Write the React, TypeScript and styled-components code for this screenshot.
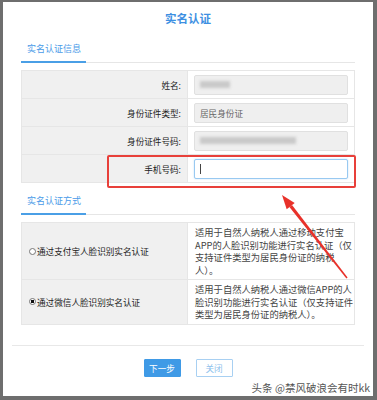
import React, { FC } from 'react'
import styled, { createGlobalStyle } from 'styled-components'

const Global = createGlobalStyle`
  html, body {
    margin: 0;
    padding: 0;
    background: #6e6e6e;
    font-family: "Noto Sans CJK SC", "Noto Sans", sans-serif;
  }
  * { box-sizing: border-box; }
`

type TInfoRow = { label: string, value?: string, blur?: number, active?: boolean }

const infoRows: TInfoRow[] = [
  { label: '姓名:', blur: 30 },
  { label: '身份证件类型:', value: '居民身份证' },
  { label: '身份证件号码:', blur: 96 },
  { label: '手机号码:', active: true },
]

type TMethod = { label: string, checked: boolean, lines: string[] }

const methods: TMethod[] = [
  {
    label: '通过支付宝人脸识别实名认证',
    checked: false,
    lines: ['适用于自然人纳税人通过移动支付宝', 'APP的人脸识别功能进行实名认证（仅', '支持证件类型为居民身份证的纳税', '人）。'],
  },
  {
    label: '通过微信人脸识别实名认证',
    checked: true,
    lines: ['适用于自然人纳税人通过微信APP的人', '脸识别功能进行实名认证（仅支持证件', '类型为居民身份证的纳税人）。'],
  },
]

const InfoTable: FC = () => (
  <S.Table>
    {infoRows.map((r) => (
      <S.Row key={r.label} $h={28}>
        <S.LabelCell>{r.label}</S.LabelCell>
        <S.ValueCell>
          <S.Input $active={r.active}>
            {r.value && <span>{r.value}</span>}
            {r.blur && <S.Blur style={{ width: r.blur }} />}
            {r.active && <S.Caret />}
          </S.Input>
        </S.ValueCell>
      </S.Row>
    ))}
  </S.Table>
)

const MethodTable: FC = () => (
  <S.Table>
    {methods.map((m) => (
      <S.Row key={m.label}>
        <S.RadioCell>
          <S.Radio $checked={m.checked} />
          {m.label}
        </S.RadioCell>
        <S.DescCell>
          {m.lines.map((l) => <div key={l}>{l}</div>)}
        </S.DescCell>
      </S.Row>
    ))}
  </S.Table>
)

const Arrow: FC = () => (
  <S.ArrowSvg width="377" height="400" viewBox="0 0 377 400">
    <polygon points="282,195 294.7,203 286.7,209.2" fill="#e8312a" />
    <polygon points="292,205.1 347.6,277.5 346.4,278.5 289.4,207.1" fill="#e8312a" />
  </S.ArrowSvg>
)

export default function App() {
  return (
    <S.Page>
      <Global />
      <S.Modal>
        <S.Title>实名认证</S.Title>
        <S.Body>
          <S.TabBar><S.Tab>实名认证信息</S.Tab></S.TabBar>
          <InfoTable />
          <S.TabBar $gap={4}><S.Tab>实名认证方式</S.Tab></S.TabBar>
          <MethodTable />
        </S.Body>
        <S.Footer>
          <S.Button $primary>下一步</S.Button>
          <S.Button>关闭</S.Button>
        </S.Footer>
        <S.Watermark>头条 @禁风破浪会有时kk</S.Watermark>
      </S.Modal>
      <S.Highlight />
      <Arrow />
    </S.Page>
  )
}

const S = {
  Page: styled.div`
    position: relative;
    width: 377px;
    height: 400px;
    padding: 2px 4px 4px 3px;
    overflow: hidden;
  `,
  Modal: styled.div`
    position: relative;
    height: 100%;
    background: #fff;
    display: flex;
    flex-direction: column;
  `,
    Title: styled.div`
      height: 33px;
      line-height: 33px;
      text-align: center;
      font-size: 11.5px;
      font-weight: bold;
      color: #3d8fe2;
    `,
    Body: styled.div`
      padding: 0 18px;
    `,
      TabBar: styled.div<{ $gap?: number }>`
        display: flex;
        margin-top: ${(p) => p.$gap || 0}px;
        margin-bottom: 7px;
        border-bottom: 1px solid #e6e6e6;
      `,
        Tab: styled.div`
          width: 65px;
          height: 28px;
          line-height: 28px;
          padding-left: 6px;
          margin-bottom: -1px;
          font-size: 9px;
          color: #4a9be8;
          border-bottom: 2px solid #4a9fe6;
        `,
      Table: styled.div`
        border: 1px solid #e6e6e6;
        border-bottom: none;
      `,
        Row: styled.div<{ $h?: number }>`
          display: grid;
          grid-template-columns: 166px 1fr;
          ${(p) => (p.$h ? `height: ${p.$h}px;` : '')}
          border-bottom: 1px solid #e6e6e6;
        `,
          LabelCell: styled.div`
            background: #f0f0f0;
            border-right: 1px solid #e6e6e6;
            display: flex;
            align-items: center;
            justify-content: flex-end;
            padding-right: 6px;
            font-size: 8.6px;
            color: #222;
          `,
          ValueCell: styled.div`
            display: flex;
            align-items: center;
            padding: 0 6px 0 6px;
          `,
            Input: styled.div<{ $active?: boolean }>`
              width: 100%;
              height: 20px;
              display: flex;
              align-items: center;
              padding-left: 5px;
              border-radius: 2px;
              font-size: 8.6px;
              color: #666;
              background: ${(p) => (p.$active ? '#fff' : '#efefef')};
              border: 1px solid ${(p) => (p.$active ? '#98c9f1' : '#e0e0e0')};
              ${(p) => (p.$active ? 'box-shadow: 0 0 2px rgba(80,160,230,0.35);' : '')}
            `,
              Blur: styled.span`
                display: block;
                height: 7px;
                background: #c9c9c9;
                filter: blur(1.5px);
              `,
              Caret: styled.span`
                display: block;
                width: 1px;
                height: 10px;
                background: #444;
              `,
          RadioCell: styled.div`
            background: #f0f0f0;
            border-right: 1px solid #e6e6e6;
            display: flex;
            align-items: center;
            padding-left: 7px;
            font-size: 8.6px;
            color: #222;
          `,
            Radio: styled.span<{ $checked: boolean }>`
              width: 7px;
              height: 7px;
              border-radius: 50%;
              border: 1px solid #777;
              background: ${(p) => (p.$checked ? 'radial-gradient(circle, #111 0 45%, #fff 55%)' : '#fff')};
              margin-right: 1px;
            `,
          DescCell: styled.div`
            padding: 3px 4px 3px 7px;
            font-size: 9.3px;
            line-height: 12.5px;
            color: #444;
            white-space: nowrap;
          `,
    Footer: styled.div`
      margin: 20px 9px 0 9px;
      border-top: 1px solid #e8e8e8;
      padding-top: 13px;
      display: flex;
      justify-content: center;
      gap: 15px;
    `,
      Button: styled.div<{ $primary?: boolean }>`
        width: 37px;
        height: 18px;
        line-height: 16px;
        text-align: center;
        font-size: 8.6px;
        border-radius: 1px;
        color: ${(p) => (p.$primary ? '#fff' : '#8cc0ec')};
        background: ${(p) => (p.$primary ? '#3f9ae6' : '#fff')};
        border: 1px solid ${(p) => (p.$primary ? '#3f9ae6' : '#a8d0f2')};
      `,
    Watermark: styled.div`
      position: absolute;
      right: 3px;
      bottom: 1px;
      font-size: 10.5px;
      color: #555;
      text-shadow: 0 0 2px #fff, 0 0 2px #fff;
    `,
  Highlight: styled.div`
    position: absolute;
    left: 107px;
    top: 155px;
    width: 249px;
    height: 33px;
    border: 2px solid #e8403a;
    border-radius: 2px;
  `,
  ArrowSvg: styled.svg`
    position: absolute;
    left: 0;
    top: 0;
    pointer-events: none;
  `,
}
